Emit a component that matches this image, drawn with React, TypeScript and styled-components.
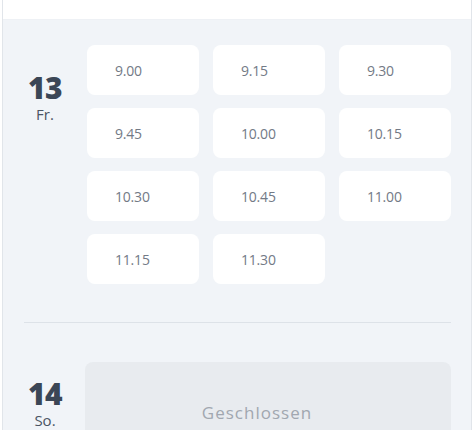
import React from "react";
import styled, { createGlobalStyle } from "styled-components";

const GlobalStyle = createGlobalStyle`
  html, body {
    margin: 0;
    padding: 0;
    background: #ffffff;
  }
  body {
    font-family: "Open Sans", "Liberation Sans", sans-serif;
    overflow: hidden;
  }
`;

interface Day {
  date: number;
  weekday: string;
  slots: string[];
}

const DAYS: Day[] = [
  {
    date: 13,
    weekday: "Fr.",
    slots: ["9.00", "9.15", "9.30", "9.45", "10.00", "10.15", "10.30", "10.45", "11.00", "11.15", "11.30"],
  },
  { date: 14, weekday: "So.", slots: [] },
];

const StyledPanel = styled.div`
  margin: 0 2px;
  height: 430px;
  border-left: 1px solid #e1e5ea;
  border-right: 1px solid #e1e5ea;
  background: #f1f4f8;
  overflow: hidden;
`;

const StyledHeader = styled.div`
  height: 19px;
  background: #ffffff;
  border-bottom: 1px solid #eef1f5;
`;

const StyledDayList = styled.div`
  display: flex;
  flex-direction: column;
  padding: 25px 20px 0 0;
`;

const StyledDayRow = styled.div`
  display: grid;
  grid-template-columns: 84px 1fr;
  align-items: start;
`;

const StyledDayLabel = styled.div<{ $top: number }>`
  display: flex;
  flex-direction: column;
  align-items: center;
  padding-top: ${({ $top }) => $top}px;
  color: #3b4656;
`;

const StyledDate = styled.span`
  font-size: 30px;
  font-weight: 800;
  line-height: 34px;
  letter-spacing: -0.5px;
`;

const StyledWeekday = styled.span`
  font-size: 15px;
  font-weight: 500;
  line-height: 18px;
  color: #4b5563;
`;

const StyledSlotGrid = styled.div`
  display: grid;
  grid-template-columns: repeat(3, 112px);
  column-gap: 14px;
  row-gap: 13px;
`;

const StyledSlot = styled.button`
  height: 50px;
  border: none;
  border-radius: 8px;
  background: #ffffff;
  padding: 0 0 0 28px;
  text-align: left;
  font-family: inherit;
  font-size: 14px;
  letter-spacing: -0.2px;
  color: #737a86;
  cursor: pointer;
`;

const StyledDivider = styled.hr`
  margin: 38px 0 39px 21px;
  border: none;
  border-top: 1px solid #dde2e8;
`;

const StyledClosed = styled.div`
  height: 100px;
  margin-left: -2px;
  padding-right: 22px;
  border-radius: 8px;
  background: #e8ebef;
  display: flex;
  align-items: center;
  justify-content: center;
  font-size: 17px;
  letter-spacing: 1px;
  color: #a1a7b0;
`;

const DayBlock: React.FunctionComponent<{ day: Day }> = ({ day }) => {
  const isClosed = day.slots.length === 0;

  return (
    <StyledDayRow>
      <StyledDayLabel $top={isClosed ? 15 : 26}>
        <StyledDate>{day.date}</StyledDate>
        <StyledWeekday>{day.weekday}</StyledWeekday>
      </StyledDayLabel>
      {isClosed ? (
        <StyledClosed>Geschlossen</StyledClosed>
      ) : (
        <StyledSlotGrid>
          {day.slots.map((slot) => (
            <StyledSlot key={slot}>{slot}</StyledSlot>
          ))}
        </StyledSlotGrid>
      )}
    </StyledDayRow>
  );
};

const App: React.FunctionComponent = () => (
  <>
    <GlobalStyle />
    <StyledPanel>
      <StyledHeader />
      <StyledDayList>
        {DAYS.map((day, index) => (
          <React.Fragment key={day.date}>
            {index > 0 && <StyledDivider />}
            <DayBlock day={day} />
          </React.Fragment>
        ))}
      </StyledDayList>
    </StyledPanel>
  </>
);

export default App;
